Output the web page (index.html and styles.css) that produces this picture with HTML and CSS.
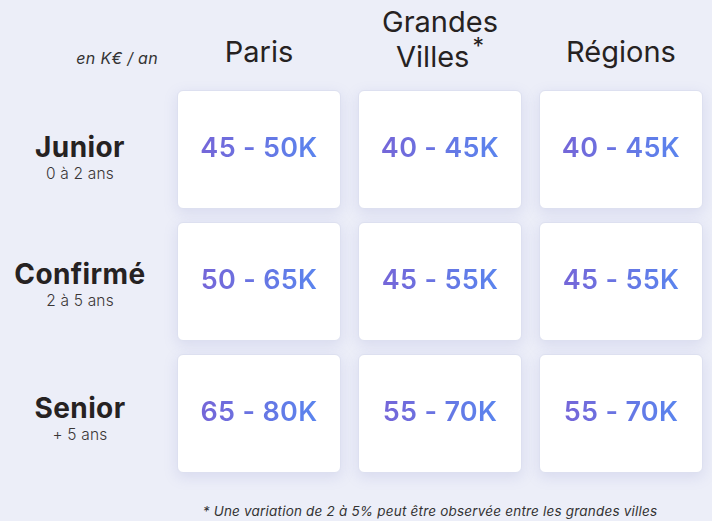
FILE: index.html
```html
<!DOCTYPE html>
<html lang="fr">
<head>
<meta charset="utf-8">
<link rel="stylesheet" href="styles.css">
</head>
<body>
<div class="grid">
  <div class="unit">en K€ / an</div>
  <div class="colhead">Paris</div>
  <div class="colhead colhead--two">Grandes<br>Villes<span class="star">*</span></div>
  <div class="colhead">Régions</div>

  <div class="rowhead rowhead--junior"><div class="level">Junior</div><div class="years">0 à 2 ans</div></div>
  <div class="card"><span class="value">45 - 50K</span></div>
  <div class="card"><span class="value">40 - 45K</span></div>
  <div class="card"><span class="value">40 - 45K</span></div>

  <div class="rowhead rowhead--confirme"><div class="level">Confirmé</div><div class="years">2 à 5 ans</div></div>
  <div class="card"><span class="value">50 - 65K</span></div>
  <div class="card"><span class="value">45 - 55K</span></div>
  <div class="card"><span class="value">45 - 55K</span></div>

  <div class="rowhead rowhead--senior"><div class="level">Senior</div><div class="years">+ 5 ans</div></div>
  <div class="card"><span class="value">65 - 80K</span></div>
  <div class="card"><span class="value">55 - 70K</span></div>
  <div class="card"><span class="value">55 - 70K</span></div>

  <div class="note">* Une variation de 2 à 5% peut être observée entre les grandes villes</div>
</div>
</body>
</html>
```
FILE: styles.css
```css
html, body {
  margin: 0;
  padding: 0;
}
body {
  background: #eceef8;
  font-family: "Inter", "DejaVu Sans", sans-serif;
  color: #262222;
  width: 712px;
  height: 521px;
  overflow: hidden;
}
.grid {
  display: grid;
  grid-template-columns: 160px 164px 164px 164px;
  grid-template-rows: 77px 119px 119px 119px auto;
  column-gap: 17px;
  row-gap: 13px;
}
.unit {
  align-self: end;
  justify-self: end;
  font-style: italic;
  font-size: 16px;
  letter-spacing: 0.3px;
  color: #333;
  padding-bottom: 9px;
  padding-right: 2px;
}
.colhead {
  align-self: end;
  text-align: center;
  font-size: 29px;
  line-height: 35px;
  padding-bottom: 8px;
}
.colhead--two {
  padding-bottom: 3px;
}
.star {
  font-size: 23px;
  line-height: 0;
  margin-left: 3px;
  position: relative;
  top: -13px;
}
.rowhead {
  display: flex;
  flex-direction: column;
  align-items: center;
  justify-content: center;
}
.rowhead--junior {
  padding-top: 14px;
}
.rowhead--confirme {
  padding-top: 4px;
}
.rowhead--senior {
  padding-top: 8px;
}
.level {
  font-size: 28px;
  font-weight: 700;
  line-height: 34px;
  letter-spacing: 0.4px;
}
.years {
  font-size: 15.5px;
  font-weight: 300;
  color: #3a3636;
  line-height: 19px;
  letter-spacing: 0.2px;
}
.card {
  background: #fff;
  border: 1px solid #dde0f0;
  border-radius: 6px;
  box-shadow: 0 4px 14px rgba(120, 130, 200, 0.18);
  display: flex;
  align-items: center;
  justify-content: center;
}
.value {
  font-size: 27px;
  font-weight: 600;
  letter-spacing: 0.3px;
  background: linear-gradient(90deg, #7566d8, #5a84ee);
  -webkit-background-clip: text;
  background-clip: text;
  color: transparent;
  padding-bottom: 4px;
}
.note {
  grid-column: 2 / 5;
  text-align: center;
  font-style: italic;
  font-size: 13.5px;
  letter-spacing: 0.2px;
  color: #333;
  padding-top: 17px;
  padding-right: 20px;
}
```
